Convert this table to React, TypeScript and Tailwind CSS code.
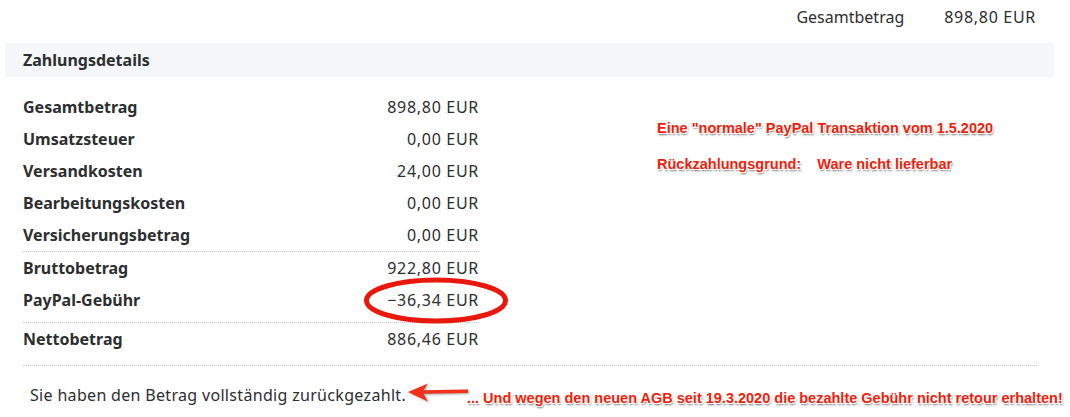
import React from "react";

const annot =
  "font-['Liberation_Sans',Arial,sans-serif] font-bold text-[14.5px] leading-[20px] text-[#ef1d0c] whitespace-pre [text-shadow:-1px_-1px_0_#fff,1px_-1px_0_#fff,-1px_1px_0_#fff,1px_1px_0_#fff,0_-1px_0_#fff,0_1px_0_#fff,1px_2px_2px_rgba(0,0,0,0.6)]";

function Row({ label, value }: { label: string; value: string }) {
  return (
    <div className="flex justify-between h-[32px] leading-[32px]">
      <span className="font-bold">{label}</span>
      <span className="tracking-[0.7px]">{value}</span>
    </div>
  );
}

export default function App() {
  return (
    <div className="relative w-[1070px] h-[417px] overflow-hidden bg-white font-['Noto_Sans',sans-serif] text-[16px] leading-[24px] text-[#2c2e2f]">
      <div className="flex justify-end gap-[40px] pt-[5px] pr-[34px]">
        <span>Gesamtbetrag</span>
        <span className="tracking-[0.7px]">898,80 EUR</span>
      </div>

      <div className="ml-[5px] mt-[14px] h-[34px] w-[1049px] bg-[#f5f7fa] pl-[18px] pt-[5px] font-bold">
        Zahlungsdetails
      </div>

      <div className="ml-[23px] mt-[14px] flex">
        <div className="w-[456px]">
          <Row label="Gesamtbetrag" value="898,80 EUR" />
          <Row label="Umsatzsteuer" value="0,00 EUR" />
          <Row label="Versandkosten" value="24,00 EUR" />
          <Row label="Bearbeitungskosten" value="0,00 EUR" />
          <Row label="Versicherungsbetrag" value="0,00 EUR" />
          <div className="border-t border-dotted border-[#c8cdd2]" />
          <Row label="Bruttobetrag" value="922,80 EUR" />
          <Row label="PayPal-Gebühr" value="−36,34 EUR" />
          <div className="mt-[6px] border-t border-dotted border-[#c8cdd2]" />
          <Row label="Nettobetrag" value="886,46 EUR" />
        </div>
        <div className="pl-[178px] pt-[27px]">
          <div className={annot}>Eine "normale" PayPal Transaktion vom 1.5.2020</div>
          <div className={`${annot} mt-[16px]`}>{"Rückzahlungsgrund:    Ware nicht lieferbar"}</div>
        </div>
      </div>

      <div className="ml-[23px] mt-[10px] w-[1014px] border-t border-dotted border-[#c8cdd2]" />

      <div className="ml-[30px] mt-[17px] flex items-start">
        <span className="w-[375px] shrink-0 whitespace-nowrap tracking-[0.32px]">Sie haben den Betrag vollständig zurückgezahlt.</span>
        <svg width="64" height="22" viewBox="0 0 64 22" className="mt-[-1px] shrink-0 drop-shadow-[1px_1px_1px_rgba(0,0,0,0.35)]">
          <path d="M3 10 L23 1.5 L18.5 8.2 L63 7.6 L63 11 L18.5 11.8 L23 19.5 Z" fill="#f0311c" />
        </svg>
        <span className={`${annot} ml-[-2px] mt-[5px]`}>
          ... Und wegen den neuen AGB seit 19.3.2020 die bezahlte Gebühr nicht retour erhalten!
        </span>
      </div>

      <svg
        className="absolute left-[360px] top-[275px]"
        width="152"
        height="52"
        viewBox="0 0 152 52"
      >
        <ellipse cx="76" cy="25.5" rx="69.5" ry="20.5" fill="none" stroke="#e8180c" strokeWidth="5" />
      </svg>
    </div>
  );
}
